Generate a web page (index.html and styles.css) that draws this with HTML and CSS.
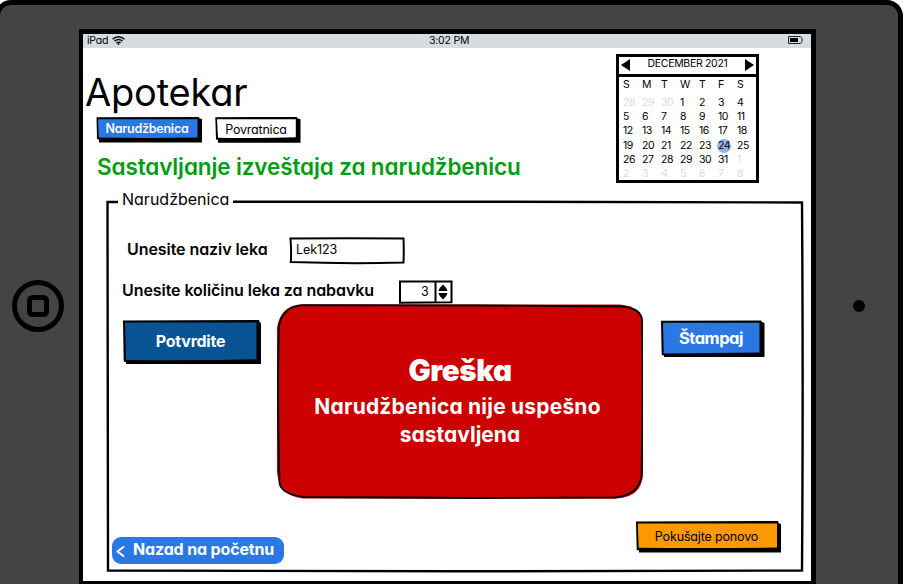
FILE: index.html
```html
<!DOCTYPE html>
<html lang="sr-Latn">
<head>
<meta charset="utf-8">
<title>Apotekar</title>
<link rel="stylesheet" href="styles.css">
</head>
<body>
<div class="device">
  <div class="bezel bezel-left">
    <svg class="home" viewBox="0 0 52 52"><circle cx="26" cy="26" r="23.5"/><rect x="17.5" y="17.5" width="17" height="17" rx="3"/></svg>
  </div>
  <main class="screen">
    <div class="status">
      <span class="carrier">iPad</span>
      <svg class="wifi" viewBox="0 0 13 9"><path d="M.6 3.1Q6.5-1.6 12.4 3.1M2.5 5.1Q6.5 1.9 10.5 5.1M4.4 6.9Q6.5 5.3 8.6 6.9"/><circle cx="6.5" cy="8" r=".9"/></svg>
      <span class="time">3:02 PM</span>
      <svg class="battery" viewBox="0 0 15 8"><path d="M.5.5H12.5L14 2.3V5.7L12.500 7.5H.5Z"/><rect x="2" y="2" width="8" height="4"/></svg>
    </div>
    <header class="top">
      <div class="intro">
        <h1>Apotekar</h1>
        <nav class="tabs">
          <button class="btn tab-order"><svg viewBox="0 0 106 26"><path class="ink" d="M.5.2 103 0 103.500 1.500 106 2V25.500H3V22.500L1 22Z"/><path class="blue" d="M2 2.200H101.500V20.500Q50 21.300 2.800 20.500Z"/></svg><span>Narudžbenica</span></button>
          <button class="btn tab-return"><svg viewBox="0 0 86 26"><path class="ink" d="M.3.200 82 0 82.500 1.500 85.500 2V25.700H3V23L1 22.500Z"/><path class="white" d="M2 2.200H80.800V20.300Q40 21.300 3 20.800Z"/></svg><span>Povratnica</span></button>
        </nav>
        <h2>Sastavljanje izveštaja za narudžbenicu</h2>
      </div>
      <div class="calendar">
        <div class="cal-head"><svg viewBox="0 0 9 12"><path d="M9 0V12L0 6Z"/></svg><span>DECEMBER 2021</span><svg viewBox="0 0 9 12"><path d="M0 0V12L9 6Z"/></svg></div>
        <div class="week names"><span>S</span><span>M</span><span>T</span><span>W</span><span>T</span><span>F</span><span>S</span></div>
        <div class="week"><i>28</i><i>29</i><i>30</i><span>1</span><span>2</span><span>3</span><span>4</span></div>
        <div class="week"><span>5</span><span>6</span><span>7</span><span>8</span><span>9</span><span>10</span><span>11</span></div>
        <div class="week"><span>12</span><span>13</span><span>14</span><span>15</span><span>16</span><span>17</span><span>18</span></div>
        <div class="week"><span>19</span><span>20</span><span>21</span><span>22</span><span>23</span><span class="today">24</span><span>25</span></div>
        <div class="week"><span>26</span><span>27</span><span>28</span><span>29</span><span>30</span><span>31</span><i>1</i></div>
        <div class="week"><i>2</i><i>3</i><i>4</i><i>5</i><i>6</i><i>7</i><i>8</i></div>
      </div>
    </header>
    <section class="group">
      <svg class="outline" viewBox="0 0 698 383"><path d="M12 12H1.500Q1.200 200 2 380.500L350 381.300 696 380.500Q697.300 200 696 12.500L400 11.800H127"/></svg>
      <div class="legend">Narudžbenica</div>
      <div class="field field-name">
        <label>Unesite naziv leka</label>
        <div class="input"><svg viewBox="0 0 116 28"><path d="M1.500 1.500Q58 .8 114.500 1.500 115 14 114.500 25.500 58 27 1.800 25Q2.500 14 1.500 1.500Z"/></svg><span>Lek123</span></div>
      </div>
      <div class="field field-count">
        <label>Unesite količinu leka za nabavku</label>
        <div class="spinner"><svg viewBox="0 0 54 24"><path d="M1 1.500H52.500V22.300L1 22.800ZM36.500 1.500V22.500"/><path class="solid" d="M39.500 11Q40 8 43.500 5Q44 4.500 44.500 5Q48 8 48.500 11ZM39.500 13Q40 16 43.500 19Q44 19.500 44.500 19Q48 16 48.500 13Z"/></svg><span>3</span></div>
      </div>
      <div class="middle">
        <button class="btn confirm"><svg viewBox="0 0 138 44"><path class="ink" d="M0 .5 136 0 136.500 2 138 3V44H3V42L.7 41.500Z"/><path class="navy" d="M2 2.500H133.500V39.300Q70 41 3 40Z"/></svg><span>Potvrdite</span></button>
        <div class="error">
          <svg viewBox="0 0 366 195"><path class="red" d="M24 .5H343Q364 2 366 20V170Q365 193 340 194.500H26Q2 192 0 168V24Q3 2 24 .5Z"/><path class="line" d="M26 1.200 200 1.500 344 2.500Q364 4 365 16Q366.500 95 364.500 173Q361 191 338 193.500L200 194 27 193Q4 190 2.500 179Q0 90 2 22Q6 2 26 1.200Z"/></svg>
          <strong>Greška</strong>
          <p><span class="wide">Narudžbenica nije uspešno</span><br><span>sastavljena</span></p>
        </div>
        <button class="btn print"><svg viewBox="0 0 104 38"><path class="ink" d="M0 .7 100 .5 101 2 103.500 3V37H3V35.500L.7 35Z"/><path class="blue" d="M2 2.700H98.500V32.500Q50 33 2.700 33.500Z"/></svg><span>Štampaj</span></button>
      </div>
      <div class="bottom">
        <button class="back"><svg viewBox="0 0 9 13"><path d="M8 1.500 1.500 6.500 8 11.500"/></svg><span>Nazad na početnu</span></button>
        <button class="btn retry"><svg viewBox="0 0 145 32"><path class="ink" d="M0 .5 142 0 142.500 2 145 3V31.500H3V29.500L.7 29Z"/><path class="orange" d="M1.800 2.500H141V26.500Q70 27.500 2.700 26.700Z"/></svg><span>Pokušajte ponovo</span></button>
      </div>
    </section>
  </main>
  <div class="bezel bezel-right"><div class="camera"></div></div>
</div>
</body>
</html>
```
FILE: styles.css
```css
* { box-sizing: border-box; }
body { margin: 0; width: 906px; height: 584px; overflow: hidden; background: #fff; color: #000; font-family: Inter, "Liberation Sans", sans-serif; font-feature-settings: "cv11" 1; }
h1, h2, p { margin: 0; font-weight: 400; }
button { border: 0; padding: 0; background: none; font: inherit; color: inherit; font-feature-settings: inherit; }
svg { display: block; flex: none; }
span, label { white-space: nowrap; }

.device { display: flex; width: 908px; height: 584px; margin-left: -5px; background: #444; border: 5px solid #000; border-bottom: 0; border-radius: 16px 16px 0 0; }
.bezel { height: 579px; }
.bezel-left { width: 79px; padding: 275px 0 0 12px; }
.home { width: 52px; height: 52px; fill: none; stroke: #000; stroke-width: 5; }
.bezel-right { padding: 295px 0 0 37px; }
.camera { width: 12px; height: 12px; border-radius: 50%; background: #000; }
.screen { width: 737px; height: 555px; margin-top: 24px; background: #fff; border: solid #000; border-width: 5px 5px 3px 4px; flex: none; }

.status { display: flex; align-items: center; height: 14px; padding: 0 8px 2px 4px; background: #d6dde0; font-size: 10.5px; letter-spacing: -.2px; }
.wifi { width: 13px; height: 9px; margin-left: 5px; fill: none; stroke: #000; stroke-width: 1.4; }
.wifi circle { fill: #000; stroke: none; }
.carrier { width: 20px; }
.time { width: 38px; margin-left: 304px; }
.battery { width: 15px; height: 8px; margin-left: auto; fill: none; stroke: #222; }
.battery rect { fill: #000; stroke: none; }

.top { display: flex; height: 142px; }
.intro { width: 533px; padding: 25px 0 0 2px; }
h1 { font-size: 38px; line-height: 39px; letter-spacing: -.2px; }
.tabs { display: flex; margin: 5px 0 0 11px; height: 36px; }
h2 { margin-left: 12px; font-size: 22.5px; line-height: 27px; font-weight: 600; letter-spacing: -.12px; color: #009d10; white-space: nowrap; }

.btn { position: relative; display: flex; justify-content: center; align-items: center; }
.btn svg { position: absolute; left: 0; top: 0; width: 100%; height: 100%; }
.btn span { position: relative; }
.ink { fill: #000; }
.blue { fill: #2b78e4; }
.white { fill: #fff; }
.navy { fill: #085394; }
.orange { fill: #ff9900; }
.tab-order { width: 106px; height: 26px; padding: 0 4px 3px 0; font-size: 12.5px; font-weight: 600; letter-spacing: -.25px; color: #fff; }
.tab-return { width: 86px; height: 26px; margin: 0 0 0 13px; padding: 0 4px 1px 0; font-size: 12.5px; letter-spacing: -.2px; }

.calendar { width: 143px; height: 129px; margin-top: 6px; border: 3px solid #000; font-size: 10.5px; }
.cal-head { display: flex; justify-content: space-between; align-items: center; height: 20px; padding: 0 2px 3px; border-bottom: 3px solid #000; letter-spacing: -.3px; }
.cal-head span { margin-top: -1px; }
.cal-head svg { width: 9px; height: 12px; margin-top: 2px; }
.week { display: grid; grid-template-columns: repeat(7, 19px); height: 14.4px; line-height: 14.4px; padding-left: 4px; letter-spacing: -.5px; }
.names { height: 18.5px; line-height: 15px; }
.week i { font-style: normal; color: #ddd; }
.today { justify-self: start; width: 14px; height: 14px; margin-left: -1px; padding-left: 1px; border-radius: 50%; background: #8db5f0; }

.group { position: relative; width: 698px; height: 383px; margin-left: 23px; }
.outline { position: absolute; left: 0; top: 0; width: 698px; height: 383px; fill: none; stroke: #000; stroke-width: 2.4; }
.legend { position: relative; height: 20px; padding-left: 16px; line-height: 18px; font-size: 16px; }
.field { position: relative; display: flex; align-items: center; font-size: 16px; font-weight: 600; letter-spacing: -.07px; }
.field-name { height: 28px; margin-top: 27px; padding-left: 21px; }
.field-name label { width: 162px; margin-top: -5px; }
.field-count { height: 24px; margin-top: 15px; padding-left: 16px; }
.field-count label { width: 277px; margin-top: -4px; }
.input, .spinner { position: relative; font-size: 12.5px; font-weight: 400; }
.input { width: 116px; height: 28px; padding: 0 7px; line-height: 25px; }
.spinner { width: 54px; height: 24px; padding-left: 22px; line-height: 24px; }
.input svg, .spinner svg { position: absolute; left: 0; top: 0; width: 100%; height: 100%; fill: none; stroke: #000; stroke-width: 2; }
.input span, .spinner span { position: relative; }
.spinner .solid { fill: #000; stroke: none; }

.middle { display: flex; height: 195px; padding-left: 17px; }
.confirm { width: 138px; height: 44px; margin-top: 16px; padding: 0 3px 2px 0; color: #fff; font-size: 16px; font-weight: 700; letter-spacing: -.25px; }
.error { position: relative; width: 366px; height: 195px; margin-left: 16px; padding-top: 48px; text-align: center; color: #fff; font-weight: 700; }
.error svg { position: absolute; left: 0; top: 0; width: 366px; height: 195px; }
.red { fill: #cc0000; }
.line { fill: none; stroke: #000; stroke-width: 1.8; }
.error strong { position: relative; display: block; font-size: 29.5px; line-height: 36px; letter-spacing: -.4px; }
.error p { position: relative; font-size: 21px; line-height: 28px; font-weight: 700; margin-top: 5px; }
.error .wide { padding-right: 5px; letter-spacing: .2px; }
.print { width: 104px; height: 38px; margin: 16px 0 0 18px; padding: 0 4px 2px 0; color: #fff; font-size: 16.5px; font-weight: 700; letter-spacing: -.5px; }

.bottom { position: relative; display: flex; justify-content: space-between; padding: 22px 23px 0 6px; }
.back { display: flex; align-items: center; width: 172px; height: 27px; margin-top: 16px; padding: 0 0 3px 4px; border-radius: 9px; background: #2b78e4; color: #fff; font-size: 16px; font-weight: 700; letter-spacing: -.15px; }
.back svg { width: 9px; height: 13px; margin: 4px 8px 0 0; fill: none; stroke: #fff; stroke-width: 2; }
.retry { width: 145px; height: 32px; padding: 0 4px 1px 0; font-size: 12.5px; letter-spacing: -.15px; }
```
